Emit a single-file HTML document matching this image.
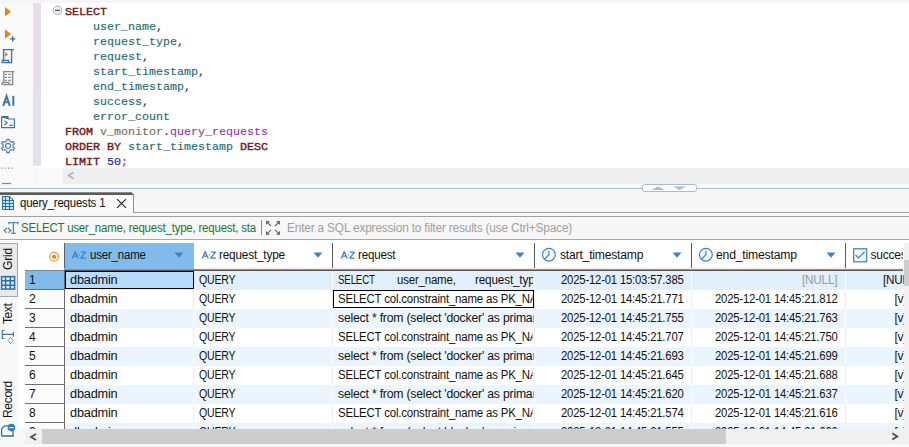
<!DOCTYPE html><html><head><meta charset="utf-8"><style>
*{margin:0;padding:0;box-sizing:border-box}
html,body{width:909px;height:447px;overflow:hidden;background:#f8f8f8;font-family:"Liberation Sans",sans-serif;position:relative}
.a{position:absolute}
.mono{position:absolute;font-family:"Liberation Mono",monospace;font-size:11.67px;letter-spacing:0px;white-space:pre;line-height:15px;-webkit-text-stroke:0.15px currentColor}
.kw{color:#761515;-webkit-text-stroke:0.4px #761515}
.id{color:#1c6e74}
.sch{color:#7d6b4e}
.tbl{color:#9437b0}
.num{color:#1c1cb0}
.pun{color:#e02a2a}
.dot{color:#333}
.ui{position:absolute;font-size:12px;letter-spacing:-0.5px;white-space:nowrap;color:#111;line-height:14px}
.cell{position:absolute;overflow:hidden;white-space:pre;font-size:12px;letter-spacing:-0.5px;line-height:19px;color:#111;height:19px}
.vt{position:absolute;font-size:12px;letter-spacing:-0.3px;white-space:nowrap;color:#111;line-height:14px;transform-origin:0 0;transform:rotate(-90deg)}
svg{position:absolute;left:0;top:0}
</style></head><body>
<div class="a" style="left:0;top:0;width:909px;height:3px;background:#f5f5f5"></div>
<div class="a" style="left:0;top:3px;width:33px;height:181px;background:#fafafa"></div>
<div class="a" style="left:41px;top:3px;width:868px;height:165px;background:#fff"></div>
<div class="a" style="left:33px;top:3px;width:8px;height:89px;background:#e8dbeb"></div>
<div class="a" style="left:33px;top:92px;width:8px;height:74px;background:#e3e1ed"></div>
<div class="a" style="left:33px;top:166px;width:8px;height:2px;background:#fff"></div>
<div class="mono" style="left:65px;top:5px"><span class="kw">SELECT</span></div>
<div class="mono" style="left:65px;top:20px">    <span class="id">user_name</span><span class="dot">,</span></div>
<div class="mono" style="left:65px;top:35px">    <span class="id">request_type</span><span class="dot">,</span></div>
<div class="mono" style="left:65px;top:50px">    <span class="id">request</span><span class="dot">,</span></div>
<div class="mono" style="left:65px;top:65px">    <span class="id">start_timestamp</span><span class="dot">,</span></div>
<div class="mono" style="left:65px;top:80px">    <span class="id">end_timestamp</span><span class="dot">,</span></div>
<div class="mono" style="left:65px;top:95px">    <span class="id">success</span><span class="dot">,</span></div>
<div class="mono" style="left:65px;top:110px">    <span class="id">error_count</span></div>
<div class="mono" style="left:65px;top:125px"><span class="kw">FROM</span> <span class="sch">v_monitor</span><span class="dot">.</span><span class="tbl">query_requests</span></div>
<div class="mono" style="left:65px;top:140px"><span class="kw">ORDER</span> <span class="kw">BY</span> <span class="id">start_timestamp</span> <span class="kw">DESC</span></div>
<div class="mono" style="left:65px;top:155px"><span class="kw">LIMIT</span> <span class="num">50</span><span class="pun">;</span></div>
<div class="a" style="left:41px;top:168px;width:22px;height:16px;background:#fafafa"></div>
<div class="a" style="left:63px;top:168px;width:846px;height:16px;background:#efefef"></div>
<div class="a" style="left:0;top:184px;width:909px;height:4px;background:#fafafa"></div>
<div class="a" style="left:0;top:188px;width:909px;height:1px;background:#a9bccf"></div>
<div class="a" style="left:0;top:189px;width:909px;height:51px;background:#f7f7f7"></div>
<div class="a" style="left:0;top:212px;width:909px;height:1px;background:#a0a0a0"></div>
<div class="a" style="left:0;top:216px;width:909px;height:1px;background:#a0a0a0"></div>
<div class="a" style="left:0;top:192px;width:134px;height:21px;background:#fafafa;border-top:3px solid #5a5a5a;border-right:1px solid #8e8e8e;border-top-right-radius:2px"></div>
<div class="a" style="left:0;top:192px;width:132px;height:1px;background:#8a8a8a"></div>
<div class="ui" style="left:20.10px;top:196px;letter-spacing:-0.200px;transform:scaleX(0.9528);transform-origin:0 0;">query_requests 1</div>
<div class="a" style="left:0;top:239px;width:909px;height:1px;background:#ababab"></div>
<div class="ui" style="left:20.90px;top:221px;letter-spacing:-0.200px;transform:scaleX(0.9535);transform-origin:0 0;color:#1d7630">SELECT user_name, request_type, request, sta</div>
<div class="ui" style="left:286.90px;top:221px;letter-spacing:-0.200px;transform:scaleX(0.9923);transform-origin:0 0;color:#a0a0a0">Enter a SQL expression to filter results (use Ctrl+Space)</div>
<div class="a" style="left:0;top:240px;width:18px;height:207px;background:#f8f8f8"></div>
<div class="a" style="left:0;top:243px;width:18px;height:54px;background:#eaeaea;border:1px solid #a9a9a9;border-left:none"></div>
<div class="vt" style="left:0.8px;top:269.5px;letter-spacing:-0.2px">Grid</div>
<div class="vt" style="left:0.8px;top:323.8px;letter-spacing:-0.4px">Text</div>
<div class="vt" style="left:0.8px;top:417.6px;letter-spacing:-0.3px">Record</div>
<div class="a" style="left:18px;top:240px;width:891px;height:189px;background:#fff"></div>
<div class="a" style="left:64px;top:243px;width:130px;height:26px;background:#80bbeb"></div>
<div class="a" style="left:64px;top:243px;width:1px;height:25px;background:#606060"></div>
<div class="ui" style="left:90.20px;top:248px;letter-spacing:-0.200px;transform:scaleX(0.9564);transform-origin:0 0;">user_name</div>
<div class="ui" style="left:219.00px;top:248px;letter-spacing:-0.200px;transform:scaleX(0.9836);transform-origin:0 0;">request_type</div>
<div class="ui" style="left:357.90px;top:248px;letter-spacing:-0.200px;transform:scaleX(0.9648);transform-origin:0 0;">request</div>
<div class="a" style="left:332px;top:243px;width:1px;height:25px;background:#5a5a5a"></div>
<div class="ui" style="left:559.70px;top:248px;letter-spacing:-0.200px;transform:scaleX(1.0110);transform-origin:0 0;">start_timestamp</div>
<div class="a" style="left:534px;top:243px;width:1px;height:25px;background:#5a5a5a"></div>
<div class="ui" style="left:716.40px;top:248px;letter-spacing:-0.200px;transform:scaleX(1.0179);transform-origin:0 0;">end_timestamp</div>
<div class="a" style="left:691px;top:243px;width:1px;height:25px;background:#5a5a5a"></div>
<div class="ui" style="left:870.40px;top:248px;letter-spacing:-0.200px;overflow:hidden;width:32.60px;">success</div>
<div class="a" style="left:845px;top:243px;width:1px;height:25px;background:#5a5a5a"></div>
<div class="a" style="left:194px;top:268px;width:709px;height:1px;background:#f5ecea"></div>
<div class="a" style="left:64px;top:269px;width:839px;height:1px;background:#c2816f"></div>
<div class="a" style="left:64px;top:270px;width:839px;height:1px;background:#5e5454"></div>
<div class="a" style="left:25px;top:270px;width:39px;height:1px;background:#7a8a98"></div>
<div class="a" style="left:0;top:0;width:909px;height:447px;clip-path:inset(271px 5px 18px 25px)">
<div class="a" style="left:64px;top:271px;width:845px;height:19px;background:#e2effd"></div>
<div class="a" style="left:193px;top:271px;width:1px;height:19px;background:#fafdff"></div>
<div class="a" style="left:332px;top:271px;width:1px;height:19px;background:#fafdff"></div>
<div class="a" style="left:534px;top:271px;width:1px;height:19px;background:#fafdff"></div>
<div class="a" style="left:691px;top:271px;width:1px;height:19px;background:#fafdff"></div>
<div class="a" style="left:845px;top:271px;width:1px;height:19px;background:#fafdff"></div>
<div class="a" style="left:25px;top:271px;width:39px;height:19px;background:#80bbeb;border-bottom:1px solid #6e6e6e"></div>
<div class="a" style="left:65px;top:271px;width:129px;height:18px;background:#b9dbfe;border:1px solid #000"></div>
<div class="ui" style="left:28.90px;top:273px;letter-spacing:-0.200px;">1</div>
<div class="ui" style="left:69.90px;top:273px;letter-spacing:-0.200px;transform:scaleX(1.0621);transform-origin:0 0;">dbadmin</div>
<div class="ui" style="left:198.60px;top:273px;letter-spacing:-0.200px;transform:scaleX(0.8787);transform-origin:0 0;">QUERY</div>
<div class="ui" style="left:337.90px;top:273px;letter-spacing:-0.200px;transform:scaleX(0.8090);transform-origin:0 0;">SELECT</div>
<div class="ui" style="left:396.80px;top:273px;letter-spacing:-0.200px;transform:scaleX(0.9553);transform-origin:0 0;">user_name,</div>
<div class="ui" style="left:474.90px;top:273px;letter-spacing:-0.200px;transform:scaleX(0.9836);transform-origin:0 0;overflow:hidden;width:59.07px;">request_type</div>
<div class="ui" style="left:560.60px;top:273px;letter-spacing:-0.200px;transform:scaleX(0.9418);transform-origin:0 0;">2025-12-01 15:03:57.385</div>
<div class="ui" style="left:802.20px;top:273px;letter-spacing:-0.200px;transform:scaleX(0.9774);transform-origin:0 0;color:#9a9a9a">[NULL]</div>
<div class="ui" style="left:882.70px;top:273px;letter-spacing:-0.200px;transform:scaleX(0.9774);transform-origin:0 0;overflow:hidden;width:21.79px;">[NULL]</div>
<div class="a" style="left:64px;top:290px;width:845px;height:19px;background:#fff"></div>
<div class="a" style="left:193px;top:290px;width:1px;height:19px;background:#ededed"></div>
<div class="a" style="left:332px;top:290px;width:1px;height:19px;background:#ededed"></div>
<div class="a" style="left:534px;top:290px;width:1px;height:19px;background:#ededed"></div>
<div class="a" style="left:691px;top:290px;width:1px;height:19px;background:#ededed"></div>
<div class="a" style="left:845px;top:290px;width:1px;height:19px;background:#ededed"></div>
<div class="a" style="left:25px;top:290px;width:39px;height:19px;background:#fcfcfc;border-bottom:1px solid #6e6e6e"></div>
<div class="a" style="left:333px;top:290px;width:201px;height:18px;border:1px solid #000"></div>
<div class="ui" style="left:28.90px;top:292px;letter-spacing:-0.200px;">2</div>
<div class="ui" style="left:69.90px;top:292px;letter-spacing:-0.200px;transform:scaleX(1.0621);transform-origin:0 0;">dbadmin</div>
<div class="ui" style="left:198.60px;top:292px;letter-spacing:-0.200px;transform:scaleX(0.8787);transform-origin:0 0;">QUERY</div>
<div class="ui" style="left:338.00px;top:292px;letter-spacing:-0.200px;transform:scaleX(0.9540);transform-origin:0 0;overflow:hidden;width:204.39px;">SELECT col.constraint_name as PK_NAME</div>
<div class="ui" style="left:560.60px;top:292px;letter-spacing:-0.200px;transform:scaleX(0.9418);transform-origin:0 0;">2025-12-01 14:45:21.771</div>
<div class="ui" style="left:714.80px;top:292px;letter-spacing:-0.200px;transform:scaleX(0.9418);transform-origin:0 0;">2025-12-01 14:45:21.812</div>
<div class="ui" style="left:894.40px;top:292px;letter-spacing:-0.200px;overflow:hidden;width:9.60px;">[v]</div>
<div class="a" style="left:64px;top:309px;width:845px;height:19px;background:#eaf5ff"></div>
<div class="a" style="left:193px;top:309px;width:1px;height:19px;background:#fafdff"></div>
<div class="a" style="left:332px;top:309px;width:1px;height:19px;background:#fafdff"></div>
<div class="a" style="left:534px;top:309px;width:1px;height:19px;background:#fafdff"></div>
<div class="a" style="left:691px;top:309px;width:1px;height:19px;background:#fafdff"></div>
<div class="a" style="left:845px;top:309px;width:1px;height:19px;background:#fafdff"></div>
<div class="a" style="left:25px;top:309px;width:39px;height:19px;background:#fcfcfc;border-bottom:1px solid #6e6e6e"></div>
<div class="ui" style="left:28.90px;top:311px;letter-spacing:-0.200px;">3</div>
<div class="ui" style="left:69.90px;top:311px;letter-spacing:-0.200px;transform:scaleX(1.0621);transform-origin:0 0;">dbadmin</div>
<div class="ui" style="left:198.60px;top:311px;letter-spacing:-0.200px;transform:scaleX(0.8787);transform-origin:0 0;">QUERY</div>
<div class="ui" style="left:338.20px;top:311px;letter-spacing:-0.200px;transform:scaleX(1.0190);transform-origin:0 0;overflow:hidden;width:192.16px;">select * from (select 'docker' as primary</div>
<div class="ui" style="left:560.60px;top:311px;letter-spacing:-0.200px;transform:scaleX(0.9418);transform-origin:0 0;">2025-12-01 14:45:21.755</div>
<div class="ui" style="left:714.80px;top:311px;letter-spacing:-0.200px;transform:scaleX(0.9418);transform-origin:0 0;">2025-12-01 14:45:21.763</div>
<div class="ui" style="left:894.40px;top:311px;letter-spacing:-0.200px;overflow:hidden;width:9.60px;">[v]</div>
<div class="a" style="left:64px;top:328px;width:845px;height:19px;background:#fff"></div>
<div class="a" style="left:193px;top:328px;width:1px;height:19px;background:#ededed"></div>
<div class="a" style="left:332px;top:328px;width:1px;height:19px;background:#ededed"></div>
<div class="a" style="left:534px;top:328px;width:1px;height:19px;background:#ededed"></div>
<div class="a" style="left:691px;top:328px;width:1px;height:19px;background:#ededed"></div>
<div class="a" style="left:845px;top:328px;width:1px;height:19px;background:#ededed"></div>
<div class="a" style="left:25px;top:328px;width:39px;height:19px;background:#fcfcfc;border-bottom:1px solid #6e6e6e"></div>
<div class="ui" style="left:28.90px;top:330px;letter-spacing:-0.200px;">4</div>
<div class="ui" style="left:69.90px;top:330px;letter-spacing:-0.200px;transform:scaleX(1.0621);transform-origin:0 0;">dbadmin</div>
<div class="ui" style="left:198.60px;top:330px;letter-spacing:-0.200px;transform:scaleX(0.8787);transform-origin:0 0;">QUERY</div>
<div class="ui" style="left:338.00px;top:330px;letter-spacing:-0.200px;transform:scaleX(0.9540);transform-origin:0 0;overflow:hidden;width:204.39px;">SELECT col.constraint_name as PK_NAME</div>
<div class="ui" style="left:560.60px;top:330px;letter-spacing:-0.200px;transform:scaleX(0.9418);transform-origin:0 0;">2025-12-01 14:45:21.707</div>
<div class="ui" style="left:714.80px;top:330px;letter-spacing:-0.200px;transform:scaleX(0.9418);transform-origin:0 0;">2025-12-01 14:45:21.750</div>
<div class="ui" style="left:894.40px;top:330px;letter-spacing:-0.200px;overflow:hidden;width:9.60px;">[v]</div>
<div class="a" style="left:64px;top:347px;width:845px;height:19px;background:#eaf5ff"></div>
<div class="a" style="left:193px;top:347px;width:1px;height:19px;background:#fafdff"></div>
<div class="a" style="left:332px;top:347px;width:1px;height:19px;background:#fafdff"></div>
<div class="a" style="left:534px;top:347px;width:1px;height:19px;background:#fafdff"></div>
<div class="a" style="left:691px;top:347px;width:1px;height:19px;background:#fafdff"></div>
<div class="a" style="left:845px;top:347px;width:1px;height:19px;background:#fafdff"></div>
<div class="a" style="left:25px;top:347px;width:39px;height:19px;background:#fcfcfc;border-bottom:1px solid #6e6e6e"></div>
<div class="ui" style="left:28.90px;top:349px;letter-spacing:-0.200px;">5</div>
<div class="ui" style="left:69.90px;top:349px;letter-spacing:-0.200px;transform:scaleX(1.0621);transform-origin:0 0;">dbadmin</div>
<div class="ui" style="left:198.60px;top:349px;letter-spacing:-0.200px;transform:scaleX(0.8787);transform-origin:0 0;">QUERY</div>
<div class="ui" style="left:338.20px;top:349px;letter-spacing:-0.200px;transform:scaleX(1.0190);transform-origin:0 0;overflow:hidden;width:192.16px;">select * from (select 'docker' as primary</div>
<div class="ui" style="left:560.60px;top:349px;letter-spacing:-0.200px;transform:scaleX(0.9418);transform-origin:0 0;">2025-12-01 14:45:21.693</div>
<div class="ui" style="left:714.80px;top:349px;letter-spacing:-0.200px;transform:scaleX(0.9418);transform-origin:0 0;">2025-12-01 14:45:21.699</div>
<div class="ui" style="left:894.40px;top:349px;letter-spacing:-0.200px;overflow:hidden;width:9.60px;">[v]</div>
<div class="a" style="left:64px;top:366px;width:845px;height:19px;background:#fff"></div>
<div class="a" style="left:193px;top:366px;width:1px;height:19px;background:#ededed"></div>
<div class="a" style="left:332px;top:366px;width:1px;height:19px;background:#ededed"></div>
<div class="a" style="left:534px;top:366px;width:1px;height:19px;background:#ededed"></div>
<div class="a" style="left:691px;top:366px;width:1px;height:19px;background:#ededed"></div>
<div class="a" style="left:845px;top:366px;width:1px;height:19px;background:#ededed"></div>
<div class="a" style="left:25px;top:366px;width:39px;height:19px;background:#fcfcfc;border-bottom:1px solid #6e6e6e"></div>
<div class="ui" style="left:28.90px;top:368px;letter-spacing:-0.200px;">6</div>
<div class="ui" style="left:69.90px;top:368px;letter-spacing:-0.200px;transform:scaleX(1.0621);transform-origin:0 0;">dbadmin</div>
<div class="ui" style="left:198.60px;top:368px;letter-spacing:-0.200px;transform:scaleX(0.8787);transform-origin:0 0;">QUERY</div>
<div class="ui" style="left:338.00px;top:368px;letter-spacing:-0.200px;transform:scaleX(0.9540);transform-origin:0 0;overflow:hidden;width:204.39px;">SELECT col.constraint_name as PK_NAME</div>
<div class="ui" style="left:560.60px;top:368px;letter-spacing:-0.200px;transform:scaleX(0.9418);transform-origin:0 0;">2025-12-01 14:45:21.645</div>
<div class="ui" style="left:714.80px;top:368px;letter-spacing:-0.200px;transform:scaleX(0.9418);transform-origin:0 0;">2025-12-01 14:45:21.688</div>
<div class="ui" style="left:894.40px;top:368px;letter-spacing:-0.200px;overflow:hidden;width:9.60px;">[v]</div>
<div class="a" style="left:64px;top:385px;width:845px;height:19px;background:#eaf5ff"></div>
<div class="a" style="left:193px;top:385px;width:1px;height:19px;background:#fafdff"></div>
<div class="a" style="left:332px;top:385px;width:1px;height:19px;background:#fafdff"></div>
<div class="a" style="left:534px;top:385px;width:1px;height:19px;background:#fafdff"></div>
<div class="a" style="left:691px;top:385px;width:1px;height:19px;background:#fafdff"></div>
<div class="a" style="left:845px;top:385px;width:1px;height:19px;background:#fafdff"></div>
<div class="a" style="left:25px;top:385px;width:39px;height:19px;background:#fcfcfc;border-bottom:1px solid #6e6e6e"></div>
<div class="ui" style="left:28.90px;top:387px;letter-spacing:-0.200px;">7</div>
<div class="ui" style="left:69.90px;top:387px;letter-spacing:-0.200px;transform:scaleX(1.0621);transform-origin:0 0;">dbadmin</div>
<div class="ui" style="left:198.60px;top:387px;letter-spacing:-0.200px;transform:scaleX(0.8787);transform-origin:0 0;">QUERY</div>
<div class="ui" style="left:338.20px;top:387px;letter-spacing:-0.200px;transform:scaleX(1.0190);transform-origin:0 0;overflow:hidden;width:192.16px;">select * from (select 'docker' as primary</div>
<div class="ui" style="left:560.60px;top:387px;letter-spacing:-0.200px;transform:scaleX(0.9418);transform-origin:0 0;">2025-12-01 14:45:21.620</div>
<div class="ui" style="left:714.80px;top:387px;letter-spacing:-0.200px;transform:scaleX(0.9418);transform-origin:0 0;">2025-12-01 14:45:21.637</div>
<div class="ui" style="left:894.40px;top:387px;letter-spacing:-0.200px;overflow:hidden;width:9.60px;">[v]</div>
<div class="a" style="left:64px;top:404px;width:845px;height:19px;background:#fff"></div>
<div class="a" style="left:193px;top:404px;width:1px;height:19px;background:#ededed"></div>
<div class="a" style="left:332px;top:404px;width:1px;height:19px;background:#ededed"></div>
<div class="a" style="left:534px;top:404px;width:1px;height:19px;background:#ededed"></div>
<div class="a" style="left:691px;top:404px;width:1px;height:19px;background:#ededed"></div>
<div class="a" style="left:845px;top:404px;width:1px;height:19px;background:#ededed"></div>
<div class="a" style="left:25px;top:404px;width:39px;height:19px;background:#fcfcfc;border-bottom:1px solid #6e6e6e"></div>
<div class="ui" style="left:28.90px;top:406px;letter-spacing:-0.200px;">8</div>
<div class="ui" style="left:69.90px;top:406px;letter-spacing:-0.200px;transform:scaleX(1.0621);transform-origin:0 0;">dbadmin</div>
<div class="ui" style="left:198.60px;top:406px;letter-spacing:-0.200px;transform:scaleX(0.8787);transform-origin:0 0;">QUERY</div>
<div class="ui" style="left:338.00px;top:406px;letter-spacing:-0.200px;transform:scaleX(0.9540);transform-origin:0 0;overflow:hidden;width:204.39px;">SELECT col.constraint_name as PK_NAME</div>
<div class="ui" style="left:560.60px;top:406px;letter-spacing:-0.200px;transform:scaleX(0.9418);transform-origin:0 0;">2025-12-01 14:45:21.574</div>
<div class="ui" style="left:714.80px;top:406px;letter-spacing:-0.200px;transform:scaleX(0.9418);transform-origin:0 0;">2025-12-01 14:45:21.616</div>
<div class="ui" style="left:894.40px;top:406px;letter-spacing:-0.200px;overflow:hidden;width:9.60px;">[v]</div>
<div class="a" style="left:64px;top:423px;width:845px;height:19px;background:#eaf5ff"></div>
<div class="a" style="left:193px;top:423px;width:1px;height:19px;background:#fafdff"></div>
<div class="a" style="left:332px;top:423px;width:1px;height:19px;background:#fafdff"></div>
<div class="a" style="left:534px;top:423px;width:1px;height:19px;background:#fafdff"></div>
<div class="a" style="left:691px;top:423px;width:1px;height:19px;background:#fafdff"></div>
<div class="a" style="left:845px;top:423px;width:1px;height:19px;background:#fafdff"></div>
<div class="a" style="left:25px;top:423px;width:39px;height:19px;background:#fcfcfc;border-bottom:1px solid #6e6e6e"></div>
<div class="ui" style="left:28.90px;top:425px;letter-spacing:-0.200px;">9</div>
<div class="ui" style="left:69.90px;top:425px;letter-spacing:-0.200px;transform:scaleX(1.0621);transform-origin:0 0;">dbadmin</div>
<div class="ui" style="left:198.60px;top:425px;letter-spacing:-0.200px;transform:scaleX(0.8787);transform-origin:0 0;">QUERY</div>
<div class="ui" style="left:338.20px;top:425px;letter-spacing:-0.200px;transform:scaleX(1.0190);transform-origin:0 0;overflow:hidden;width:192.16px;">select * from (select 'docker' as primary</div>
<div class="ui" style="left:560.60px;top:425px;letter-spacing:-0.200px;transform:scaleX(0.9418);transform-origin:0 0;">2025-12-01 14:45:21.555</div>
<div class="ui" style="left:714.80px;top:425px;letter-spacing:-0.200px;transform:scaleX(0.9418);transform-origin:0 0;">2025-12-01 14:45:21.600</div>
<div class="ui" style="left:894.40px;top:425px;letter-spacing:-0.200px;overflow:hidden;width:9.60px;">[v]</div>
<div class="a" style="left:64px;top:270px;width:1px;height:160px;background:#6a6a6a"></div>
</div>
<div class="a" style="left:18px;top:429px;width:891px;height:18px;background:#f8f8f8"></div>
<div class="a" style="left:25px;top:429px;width:884px;height:15px;background:#f0f0f0"></div>
<div class="a" style="left:42px;top:429px;width:684px;height:15px;background:#cdcdcd"></div>
<div class="a" style="left:904px;top:243px;width:5px;height:186px;background:#f0f0f0"></div>
<div class="a" style="left:904px;top:260px;width:5px;height:26px;background:#cdcdcd"></div>
<svg width="909" height="447" viewBox="0 0 909 447"><path d="M5 7 L11 11.8 L5 16.6 Z" fill="#e8850c"/><path d="M5 29.2 L11 34 L5 38.8 Z" fill="#e8850c"/><path d="M10 38.9 H15.3 M12.65 36.3 V41.5" stroke="#2e6ea6" stroke-width="1.3"/><path d="M3.6 60.5 V49.6 H14 M11.6 49.6 V62.6 H2.6 a1.1 1.1 0 0 1 0 -2.1 H8.6 V62.6" fill="none" stroke="#3a74a8" stroke-width="1.4"/><path d="M5 52 L8.2 54.4 L5 56.8 Z" fill="#e8850c"/><path d="M3.8 82.5 V71.6 H14.5 M12.6 71.6 V84.5 H2.6 a1.1 1.1 0 0 1 0 -2.1 H9 V84.5" fill="none" stroke="#8c8c8c" stroke-width="1.4"/><path d="M5 74.3 H7 M8.2 74.3 H10.9" stroke="#8c8c8c" stroke-width="1.2"/><path d="M5 77.4 H7 M8.2 77.4 H10.9" stroke="#8c8c8c" stroke-width="1.2"/><path d="M5 80.3 H7 M8.2 80.3 H10.9" stroke="#8c8c8c" stroke-width="1.2"/><path d="M3.2 105.8 L6.5 96.2 L9.8 105.8 M4.6 102.3 H8.4" fill="none" stroke="#3a78b0" stroke-width="2"/><rect x="12.3" y="95.8" width="2" height="10" fill="#3a78b0"/><path d="M1.6 117.5 H7.5 L8.5 119 H14.4 V127.7 H1.6 Z" fill="none" stroke="#3a74a8" stroke-width="1.2"/><path d="M1.6 117 H7.5 V119" stroke="#3a74a8" stroke-width="2"/><path d="M4.2 120.6 L7.2 122.8 L4.2 125" fill="none" stroke="#3a74a8" stroke-width="1.1"/><path d="M9 125.3 H13" stroke="#3a74a8" stroke-width="1.1"/><path d="M6.02 141.33 L6.84 141.05 L6.75 139.22 L9.35 139.22 L9.26 141.05 L10.08 141.33 L10.99 141.85 L11.65 142.43 L13.18 141.44 L14.48 143.69 L12.86 144.52 L13.02 145.38 L13.02 146.42 L12.86 147.28 L14.48 148.11 L13.18 150.36 L11.65 149.37 L10.99 149.95 L10.08 150.47 L9.26 150.75 L9.35 152.58 L6.75 152.58 L6.84 150.75 L6.02 150.47 L5.11 149.95 L4.45 149.37 L2.92 150.36 L1.62 148.11 L3.24 147.28 L3.08 146.42 L3.08 145.38 L3.24 144.52 L1.62 143.69 L2.92 141.44 L4.45 142.43 L5.11 141.85 Z" fill="none" stroke="#4a7fb0" stroke-width="1.1" stroke-linejoin="round"/><circle cx="8.05" cy="145.9" r="2.5" fill="none" stroke="#4a7fb0" stroke-width="1.1"/><rect x="1" y="167.5" width="1.3" height="1.3" fill="#9a9a9a"/><rect x="4.5" y="167.5" width="1.3" height="1.3" fill="#9a9a9a"/><rect x="8" y="167.5" width="1.3" height="1.3" fill="#9a9a9a"/><rect x="11.5" y="167.5" width="1.3" height="1.3" fill="#9a9a9a"/><path d="M2 183.5 H11" stroke="#5b8fc0" stroke-width="1.2"/><circle cx="57.4" cy="10.3" r="4.2" fill="#eef2f6" stroke="#a4acb6" stroke-width="1"/><path d="M55 10.4 H59.8" stroke="#505a64" stroke-width="1.3"/><path d="M73.5 172.3 L68.6 175.5 L73.5 178.7" fill="none" stroke="#b4b4b4" stroke-width="1.8"/><rect x="642.5" y="184.5" width="54" height="7" rx="2" fill="#fafafa" stroke="#a9bccf" stroke-width="1"/><path d="M651.5 190 L658 186.5 L664.5 190 Z" fill="#a9bccf"/><path d="M673 186.5 L686 186.5 L679.5 190 Z" fill="#a9bccf"/><path d="M2.5 196.5 H9.5 L13.5 200.5 V209.5 H2.5 Z" fill="#c6eef8" stroke="#2c6ea8" stroke-width="1.1"/><path d="M5.5 196.5 V209.5 M9.5 196.5 V209.5 M2.5 200.5 H13.5 M2.5 203.5 H13.5 M2.5 206.5 H13.5" stroke="#2c6ea8" stroke-width="1.1"/><path d="M9.5 196.5 V200.5 H13.5 Z" fill="#fafafa" stroke="#2c6ea8" stroke-width="1"/><path d="M131 192 H134.5 V195.5 Z" fill="#f7f7f7"/><path d="M130.8 192.5 L133.5 195.2" stroke="#6a6a6a" stroke-width="1.2"/><path d="M117 199.2 L126 207.8 M126 199.2 L117 207.8" stroke="#222" stroke-width="1.1"/><path d="M9 224.2 V222.6 H17.8 V224.2 M13.4 222.6 V233.4 M11 233.4 H15.9" fill="none" stroke="#4a8ac0" stroke-width="1.3"/><path d="M6.9 228 L4.2 230.5 L6.9 233 M8.1 228 L10.8 230.5 L8.1 233" fill="none" stroke="#4a4a4a" stroke-width="1.1" stroke-dasharray="1.3 0.5"/><path d="M261.5 220 V234.7" stroke="#8a8a8a" stroke-width="1"/><path d="M266.5 221.5 L271 226 M279.5 221.5 L275 226 M266.5 234.3 L271 229.8 M279.5 234.3 L275 229.8" stroke="#6a6a6a" stroke-width="1.2"/><path d="M266 221 H270 L266 225 Z M280 221 H276 L280 225 Z M266 234.8 H270 L266 230.8 Z M280 234.8 H276 L280 230.8 Z" fill="#6a6a6a"/><circle cx="54.1" cy="256.7" r="4.4" fill="#fff7e8" stroke="#e4a040" stroke-width="1.3"/><circle cx="54.1" cy="256.7" r="2" fill="#e8820c"/><path d="M72.19999999999999 258.6 L75.19999999999999 251.6 L78.19999999999999 258.6 M73.39999999999999 256.2 H77.0" fill="none" stroke="#3f80c0" stroke-width="1.25" stroke-linejoin="round"/><rect x="78.89999999999999" y="254.3" width="1.1" height="1.1" fill="#3f80c0"/><path d="M80.8 252.1 H85.39999999999999 L80.8 258.1 H85.8" fill="none" stroke="#3f80c0" stroke-width="1.25" stroke-linejoin="round"/><path d="M174.5 252.6 H183.5 L179 257.7 Z" fill="#3d84c0"/><path d="M202.2 258.6 L205.2 251.6 L208.2 258.6 M203.4 256.2 H207.0" fill="none" stroke="#3f82bd" stroke-width="1.25" stroke-linejoin="round"/><rect x="208.9" y="254.3" width="1.1" height="1.1" fill="#3f82bd"/><path d="M210.79999999999998 252.1 H215.4 L210.79999999999998 258.1 H215.79999999999998" fill="none" stroke="#3f82bd" stroke-width="1.25" stroke-linejoin="round"/><path d="M313.5 252.6 H322.5 L318 257.7 Z" fill="#3d84c0"/><path d="M341.20000000000005 258.6 L344.20000000000005 251.6 L347.20000000000005 258.6 M342.40000000000003 256.2 H346.0" fill="none" stroke="#3f82bd" stroke-width="1.25" stroke-linejoin="round"/><rect x="347.90000000000003" y="254.3" width="1.1" height="1.1" fill="#3f82bd"/><path d="M349.8 252.1 H354.40000000000003 L349.8 258.1 H354.8" fill="none" stroke="#3f82bd" stroke-width="1.25" stroke-linejoin="round"/><path d="M515.5 252.6 H524.5 L520 257.7 Z" fill="#3d84c0"/><circle cx="548.9" cy="254.7" r="6.4" fill="#f4faff" stroke="#3d84c0" stroke-width="1.2"/><path d="M548.9 250.8 V254.7 L544.9 258.8" fill="none" stroke="#3d84c0" stroke-width="1.2"/><path d="M672.5 252.6 H681.5 L677 257.7 Z" fill="#3d84c0"/><circle cx="705.9" cy="254.7" r="6.4" fill="#f4faff" stroke="#3d84c0" stroke-width="1.2"/><path d="M705.9 250.8 V254.7 L701.9 258.8" fill="none" stroke="#3d84c0" stroke-width="1.2"/><path d="M826.5 252.6 H835.5 L831 257.7 Z" fill="#3d84c0"/><rect x="853.7" y="248.8" width="13" height="13" fill="#f4faff" stroke="#3d7db0" stroke-width="1.2"/><path d="M855.5 254.8 L858.5 258 L864.7 252" fill="none" stroke="#3d7db0" stroke-width="1.1"/><rect x="1.6" y="276.6" width="13" height="12.5" fill="#d4f2fa" stroke="#2f6ea8" stroke-width="1.5"/><path d="M5.6 276.6 V289.1 M10.3 276.6 V289.1 M1.6 280.7 H14.6 M1.6 285.2 H14.6" stroke="#2f6ea8" stroke-width="1.5"/><path d="M4.5 330.5 H2.3 V338.5 H4.5 M2.3 334.4 H13.5 M13.4 332.2 V336.8" fill="none" stroke="#3a7ab0" stroke-width="1.2"/><path d="M8.3 340.3 L10.6 337.2 L12.9 340.3 M8.3 340.8 L10.6 343.8 L12.9 340.8" fill="none" stroke="#3a7ab0" stroke-width="1" stroke-dasharray="1.1 0.5"/><path d="M1.6 436 V429 L4.6 425.8 H8 M13 430 V436 H1.6" fill="#fff" stroke="#2f6ea0" stroke-width="1.3"/><circle cx="11.4" cy="427.6" r="3.8" fill="#2f7ac0"/><path d="M9.2 427.6 H13.6" stroke="#fff" stroke-width="1.2"/><path d="M36 434 L31 437 L36 440" fill="none" stroke="#505050" stroke-width="1.8"/><path d="M892.3 433.2 L897.3 436.4 L892.3 439.6" fill="none" stroke="#505050" stroke-width="1.8"/></svg>
</body></html>
